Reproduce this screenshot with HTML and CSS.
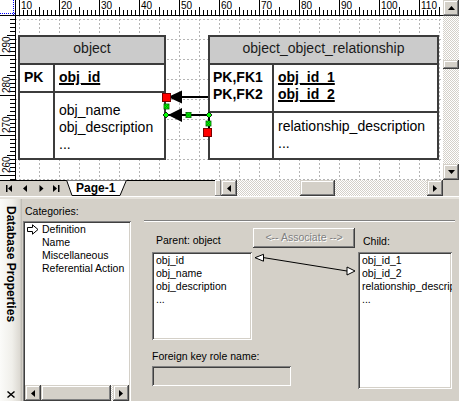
FILE: index.html
```html
<!DOCTYPE html>
<html>
<head>
<meta charset="utf-8">
<link rel="stylesheet" href="styles.css">
</head>
<body>
<div class="app">
  <div class="top">
    <div class="corner">
      <svg width="16" height="16">
        <path d="M13.5 0V15M0 13.5H15" stroke="#0000ff" stroke-dasharray="1 1" fill="none"/>
        <path d="M15.5 0V16M0 15.5H16" stroke="#000" fill="none"/>
      </svg>
    </div>
    <div class="hruler">
      <svg width="427" height="16">
        <defs>
          <pattern id="htick" width="40" height="16" patternUnits="userSpaceOnUse" x="3">
            <path d="M0.5 0V16M4.5 10V15M8.5 10V15M12.5 10V15M16.5 10V15M20.5 7V15M24.5 10V15M28.5 10V15M32.5 10V15M36.5 10V15" stroke="#000" fill="none"/>
          </pattern>
        </defs>
        <rect width="427" height="16" fill="url(#htick)"/>
        <path d="M0 15.5H427" stroke="#000"/>
        <g class="rtext">
          <text x="5" y="9">10</text>
          <text x="45" y="9">20</text>
          <text x="85" y="9">30</text>
          <text x="125" y="9">40</text>
          <text x="165" y="9">50</text>
          <text x="205" y="9">60</text>
          <text x="245" y="9">70</text>
          <text x="285" y="9">80</text>
          <text x="325" y="9">90</text>
          <text x="365" y="9">100</text>
          <text x="405" y="9">110</text>
        </g>
      </svg>
    </div>
    <div class="vscroll">
      <div class="sbtn"><svg width="7" height="4"><path d="M3.5 0L7 4H0Z" fill="#000"/></svg></div>
      <div class="vtrack"><div class="vthumb"></div></div>
      <div class="sbtn"><svg width="7" height="4"><path d="M0 0H7L3.5 4Z" fill="#000"/></svg></div>
    </div>
    <div class="vruler">
      <svg width="16" height="164">
        <defs>
          <pattern id="vtick" width="16" height="40" patternUnits="userSpaceOnUse" y="39">
            <path d="M0 0.5H16M10 4.5H15M10 8.5H15M10 12.5H15M10 16.5H15M7 20.5H15M10 24.5H15M10 28.5H15M10 32.5H15M10 36.5H15" stroke="#000" fill="none"/>
          </pattern>
        </defs>
        <rect width="16" height="164" fill="url(#vtick)"/>
        <path d="M15.5 0V164" stroke="#000"/>
        <g class="rtext">
          <text transform="translate(10 37) rotate(-90)">290</text>
          <text transform="translate(10 77) rotate(-90)">280</text>
          <text transform="translate(10 117) rotate(-90)">270</text>
          <text transform="translate(10 157) rotate(-90)">260</text>
        </g>
      </svg>
    </div>
    <div class="canvas">
      <svg class="grid" width="427" height="164">
        <defs>
          <pattern id="gridp" width="20" height="20" patternUnits="userSpaceOnUse" x="3" y="3">
            <path d="M0.5 0V20M0 0.5H20" stroke="#b4b4b4" stroke-dasharray="2 2" fill="none"/>
          </pattern>
        </defs>
        <rect width="427" height="164" fill="url(#gridp)"/>
      </svg>
      <div class="entity e1">
        <div class="ehead">object</div>
        <div class="erow keys">
          <div class="k">PK</div>
          <div class="v"><span class="pk">obj_id</span></div>
        </div>
        <div class="erow attrs">
          <div class="k"></div>
          <div class="v">obj_name<br>obj_description<br>...</div>
        </div>
      </div>
      <div class="entity e2">
        <div class="ehead">object_object_relationship</div>
        <div class="erow keys">
          <div class="k">PK,FK1<br>PK,FK2</div>
          <div class="v"><span class="pk">obj_id_1</span><br><span class="pk">obj_id_2</span></div>
        </div>
        <div class="erow attrs">
          <div class="k"></div>
          <div class="v">relationship_description<br>...</div>
        </div>
      </div>
      <svg class="links" width="427" height="164" viewBox="16 16 427 164">
        <line x1="180" y1="97" x2="208" y2="97" stroke="#000" stroke-width="2"/>
        <polygon points="168,97 182,90.5 182,103.5" fill="#000"/>
        <polyline points="166,115 209,115 209,132" fill="none" stroke="#000" stroke-width="2"/>
        <polygon points="168,115 182,108 182,122" fill="#000"/>
        <rect x="162.5" y="93.5" width="8" height="8" fill="#ff0000" stroke="#7a0000" stroke-width="1"/>
        <rect x="203.5" y="128.5" width="8" height="8" fill="#ff0000" stroke="#7a0000" stroke-width="1"/>
        <polygon points="166,112 169,115 166,118 163,115" fill="#00ff00" stroke="#000" stroke-width="0.8"/>
        <polygon points="209,112 212,115 209,118 206,115" fill="#00ff00" stroke="#000" stroke-width="0.8"/>
        <g fill="#00ff00" stroke="#006000" stroke-width="0.8">
          <rect x="164" y="104" width="5" height="5"/>
          <rect x="186" y="112.5" width="5" height="5"/>
          <rect x="206" y="121" width="5" height="5"/>
        </g>
        <path d="M164 104l5 5M169 104l-5 5M186 112.5l5 5M191 112.5l-5 5M206 121l5 5M211 121l-5 5" stroke="#008000" stroke-width="0.8"/>
      </svg>
    </div>
    <div class="hbar">
      <svg class="nav" width="66" height="16">
        <g fill="#000">
          <rect x="6" y="4" width="1.5" height="7"/>
          <path d="M8 7.5L12 4V11Z"/>
          <path d="M23 7.5L27 4V11Z"/>
          <path d="M43.5 7.5L39.5 4V11Z"/>
          <path d="M57 7.5L53 4V11Z"/>
          <rect x="58" y="4" width="1.5" height="7"/>
        </g>
      </svg>
      <svg class="tab" width="61" height="16">
        <polygon points="0.5,0 6,15.5 54,15.5 60.5,0" fill="#fff" stroke="#000"/>
        <text x="10" y="12" class="tabtext">Page-1</text>
      </svg>
      <div class="tabfill"></div>
      <div class="grip"></div>
      <div class="hscroll">
        <div class="sbtn"><svg width="4" height="7"><path d="M0 3.5L4 0V7Z" fill="#000"/></svg></div>
        <div class="htrack"><div class="hthumb"></div></div>
        <div class="sbtn"><svg width="4" height="7"><path d="M4 3.5L0 0V7Z" fill="#000"/></svg></div>
      </div>
    </div>
    <div class="sizebox"></div>
  </div>
  <div class="split"></div>
  <div class="bottom">
    <div class="side">
      <span class="sidetitle">Database Properties</span>
      <svg class="close" width="8" height="7"><path d="M0.5 0.5L7.5 6.5M7.5 0.5L0.5 6.5" stroke="#000" stroke-width="1.4"/></svg>
    </div>
    <div class="cats">
      <div class="lbl">Categories:</div>
      <div class="listbox catlist">
        <div class="citem sel"><svg class="carrow" width="12" height="11"><path d="M0.5 3.5H5.5V0.8L11 5.5L5.5 10.2V7.5H0.5Z" fill="#fff" stroke="#000"/></svg>Definition</div>
        <div class="citem">Name</div>
        <div class="citem">Miscellaneous</div>
        <div class="citem">Referential Action</div>
        <div class="lscroll">
          <div class="sbtn"><svg width="4" height="7"><path d="M0 3.5L4 0V7Z" fill="#000"/></svg></div>
          <div class="ltrack"><div class="lthumb"></div></div>
          <div class="sbtn"><svg width="4" height="7"><path d="M4 3.5L0 0V7Z" fill="#000"/></svg></div>
        </div>
      </div>
    </div>
    <div class="def">
      <div class="groupline"></div>
      <div class="defgrid">
        <div class="plabel">Parent: object</div>
        <div class="assoc">&lt;-- Associate --&gt;</div>
        <div class="clabel">Child:</div>
        <div class="listbox plist">
          <div>obj_id</div>
          <div>obj_name</div>
          <div>obj_description</div>
          <div>...</div>
        </div>
        <svg class="link" width="106" height="30">
          <line x1="12" y1="5.7" x2="95" y2="19" stroke="#000" stroke-width="1"/>
          <polygon points="3,5.7 11.5,2.3 11.5,9.2" fill="#fff" stroke="#000"/>
          <polygon points="103,19 95,15 95,23" fill="#fff" stroke="#000"/>
        </svg>
        <div class="listbox clist">
          <div>obj_id_1</div>
          <div>obj_id_2</div>
          <div>relationship_description</div>
          <div>...</div>
        </div>
        <div class="fklabel">Foreign key role name:</div>
        <div class="fkbox"></div>
      </div>
    </div>
  </div>
</div>
</body>
</html>
```
FILE: styles.css
```css
* { box-sizing: border-box; }
html, body { margin: 0; padding: 0; }
body {
  width: 459px;
  height: 401px;
  overflow: hidden;
  background: #d4d0c8;
  font-family: "Liberation Sans", Arial, sans-serif;
  font-size: 10.5px;
  line-height: 13px;
  color: #000;
}
svg { display: block; }
.app { width: 459px; height: 401px; display: flex; flex-direction: column; }

/* ---------- top diagram ---------- */
.top {
  flex: none;
  display: grid;
  grid-template-columns: 16px 427px 16px;
  grid-template-rows: 16px 164px 16px;
}
.corner { grid-column: 1; grid-row: 1; background: #fff; }
.hruler { grid-column: 2; grid-row: 1; background: #fff; }
.vruler { grid-column: 1; grid-row: 2; background: #fff; }
.rtext { font-family: "Liberation Sans", Arial, sans-serif; font-size: 10px; fill: #000; }

.vscroll { grid-column: 3; grid-row: 1 / 3; display: flex; flex-direction: column; }
.sbtn {
  width: 16px; height: 16px; flex: none;
  background: #d4d0c8;
  box-shadow: inset -1px -1px #404040, inset 1px 1px #d4d0c8, inset -2px -2px #808080, inset 2px 2px #fff;
  display: flex; align-items: center; justify-content: center;
}
.vtrack, .htrack, .ltrack {
  background-color: #fff;
  background-image: conic-gradient(#d4d0c8 25%, #fff 0 50%, #d4d0c8 0 75%, #fff 0);
  background-size: 2px 2px;
}
.vtrack { flex: 1; padding-top: 44px; }
.vthumb, .hthumb, .lthumb {
  background: #d4d0c8;
  box-shadow: inset -1px -1px #404040, inset 1px 1px #d4d0c8, inset -2px -2px #808080, inset 2px 2px #fff;
}
.vthumb { height: 9px; }

.canvas { grid-column: 2; grid-row: 2; position: relative; background: #fff; overflow: hidden; }
.grid { position: absolute; left: 0; top: 0; }
.links { position: absolute; left: 0; top: 0; overflow: visible; }

.entity {
  position: absolute;
  top: 19px;
  height: 125px;
  border: 2px solid #3c3c3c;
  background: #fff;
  display: flex;
  flex-direction: column;
  font-size: 14px;
  line-height: 17px;
  color: #000;
}
.e1 { left: 2px; width: 148px; }
.e2 { left: 192px; width: 231px; }
.ehead {
  flex: none;
  height: 28px;
  background: #cbcbcb;
  border-bottom: 2px solid #3c3c3c;
  text-align: center;
  padding-top: 3px;
  color: #1a1a1a;
}
.erow { display: flex; }
.keys { flex: none; border-bottom: 2px solid #3c3c3c; font-weight: bold; padding: 0; }
.e1 .keys { height: 28px; }
.e2 .keys { height: 48px; }
.attrs { flex: 1; }
.k { flex: none; border-right: 2px solid #3c3c3c; padding-top: 4px; }
.v { flex: 1; padding-left: 4px; padding-top: 4px; white-space: nowrap; }
.e1 .k { width: 35px; padding-left: 4px; }
.e2 .k { width: 64px; padding-left: 3px; }
.e1 .attrs .v { padding-top: 9px; }
.e2 .attrs .v { padding-top: 5px; }
.pk { text-decoration: underline; text-decoration-thickness: 2px; text-underline-offset: 1px; }

.hbar { grid-column: 1 / 3; grid-row: 3; display: flex; background: #d4d0c8; }
.nav { flex: none; border-top: 1px solid #000; }
.tab { flex: none; }
.tabtext { font-family: "Liberation Sans", Arial, sans-serif; font-size: 12px; font-weight: bold; fill: #000; }
.tabfill { flex: 1; border-top: 1px solid #000; }
.grip {
  flex: none; width: 6px;
  background: #d4d0c8;
  box-shadow: inset -1px -1px #808080, inset 1px 1px #fff;
}
.hscroll { flex: none; width: 222px; display: flex; }
.htrack { flex: 1; padding-left: 63px; }
.hthumb { width: 35px; height: 16px; }
.sizebox { grid-column: 3; grid-row: 3; background: #d4d0c8; }

.split { flex: none; height: 3px; border-top: 1px solid #fff; background: #e6e3dc; }

/* ---------- bottom panel ---------- */
.bottom { flex: 1; display: flex; min-height: 0; }
.side {
  flex: none;
  width: 22px;
  background: linear-gradient(to right, #fbfbf9 0%, #f0efea 55%, #dcd9d2 90%, #b8b5ae 100%);
  display: flex;
  flex-direction: column;
  justify-content: space-between;
  padding: 7px 0 3px;
}
.sidetitle {
  writing-mode: vertical-rl;
  font-size: 12px;
  font-weight: bold;
  line-height: 22px;
  width: 22px;
}
.close { margin-left: 7px; }

.cats { flex: none; width: 118px; padding-top: 6px; }
.lbl { padding-left: 3px; margin-bottom: 3px; }
.listbox {
  background: #fff;
  box-shadow: inset 1px 1px #808080, inset -1px -1px #fff, inset 2px 2px #404040, inset -2px -2px #d4d0c8;
  padding: 2px;
  overflow: hidden;
  white-space: nowrap;
}
.catlist {
  margin-left: 1px;
  width: 108px;
  height: 182px;
  display: flex;
  flex-direction: column;
}
.citem { padding-left: 17px; height: 13px; }
.citem.sel { display: flex; align-items: center; padding-left: 2px; }
.carrow { margin-right: 3px; }
.lscroll { margin-top: auto; display: flex; height: 16px; }
.ltrack { flex: 1; }
.lthumb { width: 70px; height: 16px; }

.def { flex: 1; padding: 21px 4px 0 4px; }
.groupline { height: 2px; border-top: 1px solid #808080; border-bottom: 1px solid #fff; }
.defgrid {
  margin-left: 8px;
  display: grid;
  grid-template-columns: 100px 106px 94px;
  grid-template-rows: 30px 88px 26px 20px;
}
.plabel { grid-column: 1; grid-row: 1; align-self: end; padding-left: 4px; margin-bottom: 5px; }
.clabel { grid-column: 3; grid-row: 1; align-self: end; padding-left: 5px; margin-bottom: 4px; }
.assoc {
  grid-column: 2; grid-row: 1;
  align-self: start;
  margin-top: 6px;
  margin-left: 1px;
  width: 102px;
  height: 20px;
  background: #d4d0c8;
  box-shadow: inset -1px -1px #404040, inset 1px 1px #fff, inset -2px -2px #808080, inset 2px 2px #d4d0c8;
  color: #808080;
  text-shadow: 1px 1px #fff;
  text-align: center;
  line-height: 19px;
}
.plist { grid-column: 1; grid-row: 2; height: 88px; padding-left: 4px; }
.link { grid-column: 2; grid-row: 2; align-self: start; }
.clist { grid-column: 3; grid-row: 2 / 5; align-self: start; height: 137px; padding-left: 4px; }
.fklabel { grid-column: 1 / 3; grid-row: 3; align-self: end; margin-bottom: 3px; }
.fkbox {
  grid-column: 1 / 3; grid-row: 4;
  width: 139px;
  height: 20px;
  background: #d4d0c8;
  box-shadow: inset 1px 1px #808080, inset -1px -1px #fff, inset 2px 2px #404040, inset -2px -2px #d4d0c8;
}
```
